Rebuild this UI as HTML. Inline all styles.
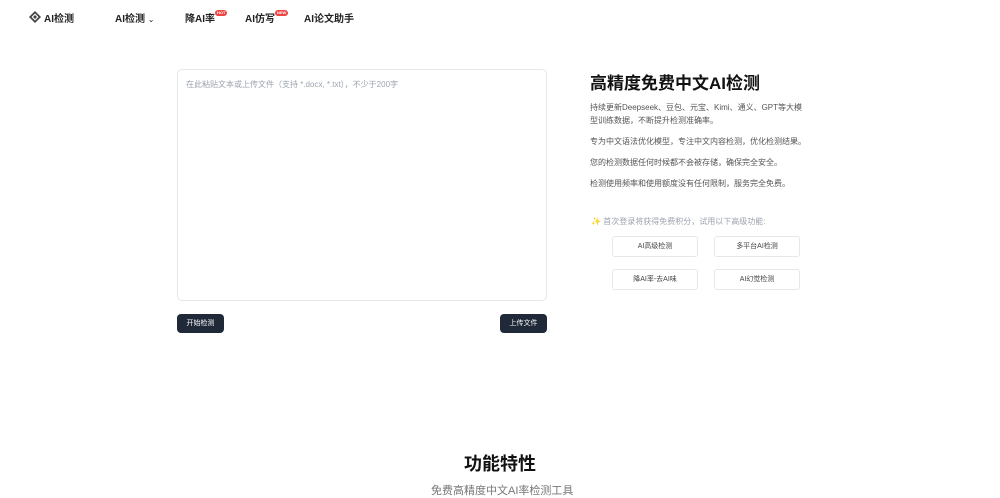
<!DOCTYPE html>
<html><head><meta charset="utf-8"><style>
*{margin:0;padding:0;box-sizing:border-box}
body{width:1000px;height:498px;overflow:hidden;background:#fff;font-family:"Liberation Sans","Noto Sans CJK SC",sans-serif;color:#111;position:relative}
.a{position:absolute;white-space:nowrap}
.nav{font-size:10px;font-weight:bold;color:#222;top:10px}
.badge{display:inline-block;background:#ef4444;color:#fff;font-size:4px;border-radius:3px;padding:0 2px;vertical-align:top;line-height:6px;margin-top:0}
.p{font-size:8px;color:#555;left:590px}
.btn{position:absolute;border:1px solid #e5e7eb;border-radius:3px;font-size:7px;color:#444;width:86px;height:21px;line-height:19px;text-align:center}
.dk{position:absolute;background:#1f2937;color:#fff;font-size:7px;border-radius:4px;height:19px;line-height:19px;text-align:center;top:314px;width:47px}
</style></head><body>
<svg class="a" style="left:29px;top:11px" width="12" height="12" viewBox="0 0 12 12"><path d="M6 0L12 6L6 12L0 6Z" fill="#444"/><path d="M6 2.5L9.5 6L6 9.5L2.5 6Z" fill="#fff"/><path d="M6 4L8 6L6 8L4 6Z" fill="#444"/></svg>
<div class="a nav" style="left:44px">AI检测</div>
<div class="a nav" style="left:115px">AI检测 <span style="font-weight:normal;font-size:8px">⌄</span></div>
<div class="a nav" style="left:185px">降AI率<span class="badge">HOT</span></div>
<div class="a nav" style="left:245px">AI仿写<span class="badge">NEW</span></div>
<div class="a nav" style="left:304px">AI论文助手</div>
<div class="a" style="left:177px;top:69px;width:370px;height:232px;border:1px solid #e5e7eb;border-radius:5px"></div>
<div class="a" style="left:186px;top:79px;font-size:8px;color:#9ca3af">在此粘贴文本或上传文件（支持 *.docx, *.txt），不少于200字</div>
<div class="dk" style="left:177px">开始检测</div>
<div class="dk" style="left:500px">上传文件</div>
<div class="a" style="left:590px;top:69px;font-size:17px;font-weight:bold">高精度免费中文AI检测</div>
<div class="a p" style="top:101px;line-height:13px">持续更新Deepseek、豆包、元宝、Kimi、通义、GPT等大模<br>型训练数据，不断提升检测准确率。</div>
<div class="a p" style="top:136px">专为中文语法优化模型，专注中文内容检测，优化检测结果。</div>
<div class="a p" style="top:157px">您的检测数据任何时候都不会被存储，确保完全安全。</div>
<div class="a p" style="top:178px">检测使用频率和使用额度没有任何限制，服务完全免费。</div>
<div class="a" style="left:591px;top:216px;font-size:8px;color:#9ca3af"><span style="color:#f59e0b">✨</span> 首次登录将获得免费积分，试用以下高级功能:</div>
<div class="btn" style="left:612px;top:236px">AI高级检测</div>
<div class="btn" style="left:714px;top:236px">多平台AI检测</div>
<div class="btn" style="left:612px;top:269px">降AI率-去AI味</div>
<div class="btn" style="left:714px;top:269px">AI幻觉检测</div>
<div class="a" style="left:464px;top:450px;font-size:18px;font-weight:bold">功能特性</div>
<div class="a" style="left:431px;top:482px;font-size:11px;color:#777">免费高精度中文AI率检测工具</div>
</body></html>
